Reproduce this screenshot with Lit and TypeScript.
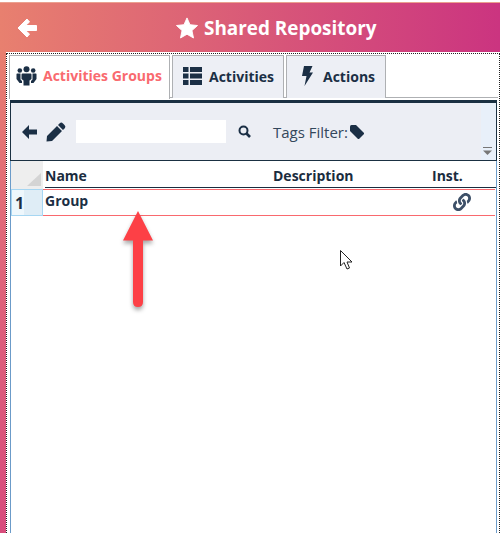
import { LitElement, html, css } from "lit";
import { customElement } from "lit/decorators.js";

@customElement("app-root")
export class AppRoot extends LitElement {
  static styles = css`
    :host { display: block; width: 504px; height: 533px; background: #fff; font-family: "Open Sans", sans-serif; color: #1b2f45; overflow: hidden; position: relative; }
    .page { display: flex; flex-direction: column; height: 533px; padding-top: 2px; box-sizing: border-box; }
    .header { height: 50px; width: 500px; flex: none; background: linear-gradient(90deg, #e8806f 0%, #d95a78 50%, #cb3480 100%); position: relative; display: flex; align-items: center; color: #fff; font-size: 18.9px; font-weight: 700; border-top: 1px solid #eba08f; box-sizing: border-box; padding-left: 176px; gap: 6px; }
    .back { position: absolute; left: 17px; top: 15px; }
    .body { flex: 1; display: flex; min-height: 0; }
    .strip { width: 6px; flex: none; background: linear-gradient(180deg, #e77e6f 0%, #e0677a 40%, #d84c7c 100%); }
    .frame { flex: none; width: 494px; margin-top: 1px; border: 1px dotted #222; border-bottom: none; box-sizing: border-box; display: flex; flex-direction: column; padding: 1px 1px 0 2px; }
    .tabs { display: flex; height: 43px; flex: none; gap: 2px; border-bottom: 1px solid #aeb0b3; box-sizing: border-box; }
    .tab { height: 43px; box-sizing: border-box; background: #edeff5; border: 1px solid #aeb0b3; border-bottom: none; display: flex; align-items: center; font-size: 14px; font-weight: 700; color: #1b2f45; padding-bottom: 2px; }
    .tab.on { background: #fff; color: #f96a6f; width: 161px; padding-left: 6px; gap: 6px; height: 44px; padding-bottom: 4px; }
    .tab.t2 { width: 112px; padding-left: 10px; gap: 7px; }
    .tab.t3 { width: 100px; padding-left: 15px; gap: 10px; }
    .panel { flex: 1; border: 1px solid #6b9bc9; border-top: none; border-bottom: none; margin: 2px 1px 0 1px; display: flex; flex-direction: column; min-height: 0; }
    .toolbar { height: 61px; flex: none; box-sizing: border-box; background: #eceef4; border: 1px solid #1a3042; border-top-width: 3px; margin: 0 -1px; position: relative; display: flex; align-items: center; padding-left: 11px; }
    .side { position: absolute; right: 0; top: 0; bottom: 0; width: 15px; background: #e8f0fa; }
    .grip { position: absolute; right: 4px; bottom: 5px; }
    .search { width: 150px; height: 23px; background: #fff; margin-left: 10px; }
    .find { margin-left: 12px; }
    .pencil { margin-left: 9px; }
    .tags { display: flex; align-items: center; margin-left: 22px; font-size: 15px; color: #33475b; gap: 2px; }
    .hrow { display: grid; grid-template-columns: 32px 230px 159px 1fr; height: 27px; flex: none; font-size: 14px; font-weight: 700; color: #1a2c3e; }
    .corner { background: #eeeeee; position: relative; margin-bottom: -1px; }
    .corner i { display: block; position: absolute; right: 2px; bottom: 3px; width: 0; height: 0; border-style: solid; border-width: 0 0 13px 14px; border-color: transparent transparent #d4d4d4 transparent; }
    .hcell { border-bottom: 1px solid #1a2c3e; line-height: 30px; height: 27px; box-sizing: border-box; }
    .hcell.first { margin-left: 2px; }
    .row { display: grid; grid-template-columns: 32px 1fr; grid-template-rows: 27px; height: 27px; margin-top: 1px; flex: none; font-size: 14px; font-weight: 700; }
    .num { background: linear-gradient(90deg, #eef7fc 0 12px, #dfedf6 12px); border: 1px solid #a6d6f2; box-sizing: border-box; padding-left: 3px; line-height: 27px; font-size: 16px; }
    .cell { border-top: 1px solid #f9696e; border-bottom: 1px solid #f9696e; margin-right: 1px; box-sizing: border-box; display: flex; justify-content: space-between; padding-left: 2px; line-height: 22px; }
    .cell svg { margin: 3px 24px 0 0; }
    .arrow { position: absolute; left: 118px; top: 208px; filter: drop-shadow(0 3px 2px rgba(0,0,0,.35)); }
    .cursor { position: absolute; left: 340px; top: 250px; }
  `;

  render() {
    return html`
      <div class="page">
        <div class="header">
          <svg class="back" width="20" height="20" viewBox="0 0 20 20"><path d="M10 1 L1 10 L10 19 L12.5 16 L8.5 12.5 H19.5 V7.5 H8.5 L12.5 4 Z" fill="#fff" stroke="#fff" stroke-linejoin="round"/></svg>
          <svg width="22" height="22" viewBox="0 0 24 24"><path d="M12 1 L15.3 8.4 L23.5 9.3 L17.4 14.8 L19.1 22.9 L12 18.8 L4.9 22.9 L6.6 14.8 L.5 9.3 L8.7 8.4 Z" fill="#fff" stroke="#fff" stroke-linejoin="round"/></svg>
          <span>Shared Repository</span>
        </div>
        <div class="body">
          <div class="strip"></div>
          <div class="frame">
            <div class="tabs">
              <div class="tab on">
                <svg width="21" height="20" viewBox="0 0 21 20" fill="#1b2f45"><circle cx="10.500" cy="3.200" r="3"/><circle cx="3.800" cy="4.500" r="2.300"/><circle cx="17.200" cy="4.500" r="2.300"/><path d="M6.500 7.500 H14.500 Q15.500 7.500 15.500 8.500 V13 L13.500 14.500 V19.500 H7.500 V14.500 L5.500 13 V8.500 Q5.500 7.500 6.500 7.500 Z"/><path d="M1 7.500 H4.500 V13.500 L6 15 V17 H3.500 L.5 13 V8 Z"/><path d="M20 7.500 H16.500 V13.500 L15 15 V17 H17.500 L20.500 13 V8 Z"/></svg>
                <span>Activities Groups</span>
              </div>
              <div class="tab t2">
                <svg width="19" height="18" viewBox="0 0 19 18" fill="#1b2f45"><path d="M0 0 H5.500 V5 H0 Z M7 0 H19 V5 H7 Z M0 6.500 H5.500 V11.500 H0 Z M7 6.500 H19 V11.500 H7 Z M0 13 H5.500 V18 H0 Z M7 13 H19 V18 H7 Z"/></svg>
                <span>Activities</span>
              </div>
              <div class="tab t3">
                <svg width="11" height="20" viewBox="0 0 11 20" fill="#1b2f45"><path d="M2 0 H10.500 L7.500 6.500 H11 L2.500 20 L4.500 10 H0 Z"/></svg>
                <span>Actions</span>
              </div>
            </div>
            <div class="panel">
              <div class="toolbar">
                <svg width="15" height="14" viewBox="0 0 15 14" fill="#1b2f45"><path d="M7 0 V4.500 H15 V9.500 H7 V14 L0 7 Z"/></svg>
                <svg class="pencil" width="20" height="20" viewBox="0 0 20 20" fill="#1b2f45"><path d="M14 1 Q15.500 0 17 1.500 L18.500 3 Q20 4.500 19 6 L17 8 L12 3 Z M11 4 L16 9 L6 19 L.5 19.500 L1 14 Z"/></svg>
                <div class="search"></div>
                <svg class="find" width="13" height="13" viewBox="0 0 13 13" fill="none" stroke="#1b2f45" stroke-width="2"><circle cx="5.500" cy="5.500" r="4"/><path d="M8.500 8.500 L12 12" stroke-width="2.600"/></svg>
                <div class="tags"><span>Tags Filter:</span>
                  <svg width="14" height="14" viewBox="0 0 14 14" fill="#1b2f45"><path d="M0 1.500 Q0 0 1.500 0 H6 L14 8 Q14.500 8.500 14 9 L9 14 Q8.500 14.500 8 14 L0 6 Z"/></svg>
                </div>
                <div class="side"></div>
                <svg class="grip" width="9" height="8" viewBox="0 0 9 8"><path d="M0 .5 H9" stroke="#777"/><path d="M0 3.500 H9 L4.500 8 Z" fill="#777"/></svg>
              </div>
              <div class="hrow">
                <div class="corner"><i></i></div>
                <div class="hcell first">Name</div><div class="hcell">Description</div><div class="hcell">Inst.</div>
              </div>
              <div class="row">
                <div class="num">1</div>
                <div class="cell"><span>Group</span>
                  <svg width="18" height="18" viewBox="0 0 512 512" fill="#3d5068"><path d="M326.612 185.391c59.747 59.809 58.927 155.698.36 214.59-.11.12-.24.25-.36.37l-67.2 67.2c-59.27 59.27-155.699 59.262-214.96 0-59.27-59.26-59.27-155.7 0-214.96l37.106-37.106c9.84-9.84 26.786-3.3 27.294 10.606.648 17.722 3.826 35.527 9.69 52.721 1.986 5.822.567 12.262-3.783 16.612l-13.087 13.087c-28.026 28.026-28.905 73.66-1.155 101.96 28.024 28.579 74.086 28.749 102.325.51l67.2-67.19c28.191-28.191 28.073-73.757 0-101.83-3.701-3.694-7.429-6.564-10.341-8.569a16.037 16.037 0 0 1-6.947-12.606c-.396-10.567 3.348-21.456 11.698-29.806l21.054-21.055c5.521-5.521 14.182-6.199 20.584-1.731a152.482 152.482 0 0 1 20.522 17.197zM467.547 44.449c-59.261-59.262-155.69-59.27-214.96 0l-67.2 67.2c-.12.12-.25.25-.36.37-58.566 58.892-59.387 154.781.36 214.59a152.454 152.454 0 0 0 20.521 17.196c6.402 4.468 15.064 3.789 20.584-1.731l21.054-21.055c8.35-8.35 12.094-19.239 11.698-29.806a16.037 16.037 0 0 0-6.947-12.606c-2.912-2.005-6.64-4.875-10.341-8.569-28.073-28.073-28.191-73.639 0-101.83l67.2-67.19c28.239-28.239 74.3-28.069 102.325.51 27.75 28.3 26.872 73.934-1.155 101.96l-13.087 13.087c-4.35 4.35-5.769 10.79-3.783 16.612 5.864 17.194 9.042 34.999 9.69 52.721.509 13.906 17.454 20.446 27.294 10.606l37.106-37.106c59.271-59.259 59.271-155.699.001-214.959z"/></svg>
                </div>
              </div>
            </div>
          </div>
        </div>
      </div>
      <svg class="arrow" width="40" height="106" viewBox="0 0 40 106"><path d="M20 3 L35 32.500 H25 V94 Q25 99 20 99 Q15 99 15 94 V32.500 H5 Z" fill="#fd4046"/></svg>
      <svg class="cursor" width="14" height="20" viewBox="0 0 14 20"><path d="M.5 .5 V16 L4 12.500 L7 19 L9.500 18 L7 12 H12 Z" fill="#fff" stroke="#222"/></svg>
    `;
  }
}
